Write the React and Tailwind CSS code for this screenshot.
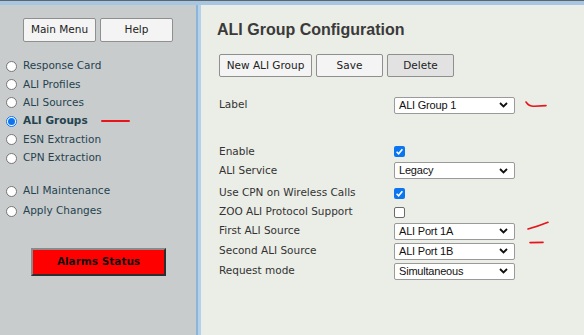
import React from "react";

const sideFont = { fontFamily: '"DejaVu Sans", Verdana, sans-serif' };

function Chevron() {
  return (
    <svg width="9" height="6" viewBox="0 0 9 6" className="shrink-0">
      <polyline points="1,1 4.5,4.5 8,1" fill="none" stroke="#111" strokeWidth="1.8" />
    </svg>
  );
}

function Select({ value }) {
  return (
    <div className="flex h-[17px] w-[121px] items-center justify-between rounded-[2px] border border-[#9a9a9a] bg-white pl-[4px] pr-[6px]">
      <span className="text-[11px] tracking-[-0.2px] text-[#111] leading-none" style={{ fontFamily: '"Liberation Sans", Arial, sans-serif' }}>
        {value}
      </span>
      <Chevron />
    </div>
  );
}

function Check({ checked }) {
  return checked ? (
    <div className="flex h-[11px] w-[11px] items-center justify-center rounded-[2px] bg-[#0b75f0]">
      <svg width="9" height="9" viewBox="0 0 9 9">
        <polyline points="1.6,4.8 3.6,6.8 7.4,2.2" fill="none" stroke="white" strokeWidth="1.6" />
      </svg>
    </div>
  ) : (
    <div className="h-[11px] w-[11px] rounded-[2px] border border-[#6b6b6b] bg-white" />
  );
}

function Row({ label, h, mt = "", children }) {
  return (
    <div className={`flex items-center ${h} ${mt}`}>
      <div className="w-[175px] text-[10.5px] text-[#333]" style={sideFont}>{label}</div>
      {children}
    </div>
  );
}

function Radio({ checked }) {
  return checked ? (
    <div className="flex h-[11px] w-[11px] items-center justify-center rounded-full border border-[#0b75f0] bg-white">
      <div className="h-[7px] w-[7px] rounded-full bg-[#0b75f0]" />
    </div>
  ) : (
    <div className="h-[11px] w-[11px] rounded-full border border-[#767676] bg-white" />
  );
}

function NavItem({ label, checked, h = "h-[18.4px]", extra }) {
  return (
    <div className={`flex items-center ${h}`}>
      <div className="ml-[6px] mr-[6px]"><Radio checked={checked} /></div>
      <span className={`text-[10.5px] text-[#24434f] ${checked ? "font-bold" : ""}`} style={sideFont}>{label}</span>
      {extra}
    </div>
  );
}

function Btn({ children, w, dark }) {
  return (
    <div className={`flex h-[23px] ${w} items-center justify-center rounded-[2px] border border-[#8f8f8f] ${dark ? "bg-[#e2e2e2]" : "bg-[#f4f4f4]"} text-[10.5px] text-[#222]`} style={sideFont}>
      {children}
    </div>
  );
}

export default function App() {
  return (
    <div className="relative flex h-[335px] w-[584px] flex-col overflow-hidden bg-[#ebede7]">
      <div className="h-[1px] bg-[#5f656b]" />
      <div className="h-[4px] bg-[#a6c6e2]" />
      <div className="flex flex-1">
        {/* Sidebar */}
        <div className="w-[196px] bg-[#c9cccd] pt-[13px]">
          <div className="ml-[23px] flex gap-[4px]">
            <div className="flex h-[24px] w-[73px] items-center justify-center rounded-[2px] border border-[#8f8f8f] bg-[#f4f4f4] text-[10.5px] text-[#222]" style={sideFont}>Main Menu</div>
            <div className="flex h-[24px] w-[73px] items-center justify-center rounded-[2px] border border-[#8f8f8f] bg-[#f4f4f4] text-[10.5px] text-[#222]" style={sideFont}>Help</div>
          </div>
          <div className="mt-[15px]">
            <NavItem label="Response Card" />
            <NavItem label="ALI Profiles" />
            <NavItem label="ALI Sources" />
            <NavItem
              label="ALI Groups"
              checked
              extra={<span className="ml-[13px] h-[2px] w-[29px] rounded-full bg-[#e8141a]" />}
            />
            <NavItem label="ESN Extraction" />
            <NavItem label="CPN Extraction" />
          </div>
          <div className="mt-[14px]">
            <NavItem label="ALI Maintenance" h="h-[20px]" />
            <NavItem label="Apply Changes" h="h-[20px]" />
          </div>
          <div className="ml-[31px] mt-[27px] flex h-[28px] w-[135px] items-center justify-center border-2 border-b-[#2e2e2e] border-l-[#8a8a8a] border-r-[#2e2e2e] border-t-[#8a8a8a] bg-[#ff0000] text-[10.5px] font-bold text-[#111]" style={sideFont}>
            Alarms Status
          </div>
        </div>
        {/* Divider */}
        <div className="flex w-[5px]">
          <div className="w-[2px] bg-[#8db5d8]" />
          <div className="w-[3px] bg-[#b5d1e9]" />
        </div>
        {/* Main */}
        <div className="flex-1 pl-[16px] pt-[15px]">
          <div className="h-[20px] text-[16px] font-bold leading-[20px] text-[#3a3a3a]" style={{ fontFamily: '"Liberation Sans", Arial, sans-serif' }}>
            ALI Group Configuration
          </div>
          <div className="ml-[2px] mt-[14px] flex gap-[4px]">
            <Btn w="w-[93px]">New ALI Group</Btn>
            <Btn w="w-[67px]">Save</Btn>
            <Btn w="w-[67px]" dark>Delete</Btn>
          </div>
          <div className="ml-[2px] mt-[18px]">
            <Row label="Label" h="h-[20px]">
              <Select value="ALI Group 1" />
            </Row>
            <Row label="Enable" h="h-[19px]" mt="mt-[27px]">
              <Check checked />
            </Row>
            <Row label="ALI Service" h="h-[19px]">
              <Select value="Legacy" />
            </Row>
            <Row label="Use CPN on Wireless Calls" h="h-[20px]" mt="mt-[3px]">
              <Check checked />
            </Row>
            <Row label="ZOO ALI Protocol Support" h="h-[18px]">
              <Check />
            </Row>
            <Row label="First ALI Source" h="h-[20px]">
              <Select value="ALI Port 1A" />
            </Row>
            <Row label="Second ALI Source" h="h-[20px]">
              <Select value="ALI Port 1B" />
            </Row>
            <Row label="Request mode" h="h-[20px]">
              <Select value="Simultaneous" />
            </Row>
          </div>
        </div>
      </div>
      {/* Hand-drawn red annotations */}
      <svg className="pointer-events-none absolute inset-0" width="584" height="335">
        <path d="M526,102 Q529,106.5 534,106.3 L546,105.6" fill="none" stroke="#e8141a" strokeWidth="1.6" strokeLinecap="round" />
        <path d="M528,229 Q539,226 548,222.3" fill="none" stroke="#e8141a" strokeWidth="1.6" strokeLinecap="round" />
        <path d="M530,242.6 L543,242.4" fill="none" stroke="#e8141a" strokeWidth="1.6" strokeLinecap="round" />
      </svg>
    </div>
  );
}
